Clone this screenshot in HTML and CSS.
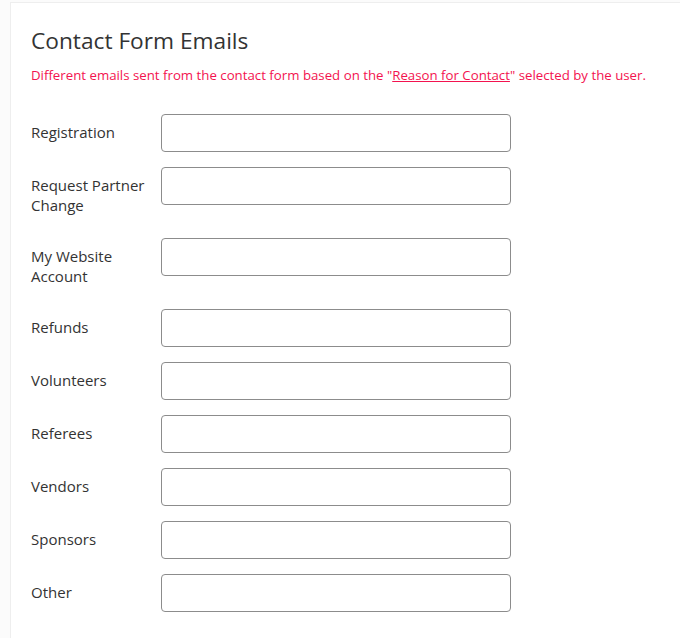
FILE: index.html
```html
<!DOCTYPE html>
<html>
<head>
<meta charset="utf-8">
<link rel="stylesheet" href="styles.css">
</head>
<body>
<div class="card">
  <h1 class="title">Contact Form Emails</h1>
  <p class="note">Different emails sent from the contact form based on the "<a href="#" class="note-link">Reason for Contact</a>" selected by the user.</p>
  <form class="form">
    <div class="row"><label class="label">Registration</label><input class="field" type="text"></div>
    <div class="row"><label class="label">Request Partner Change</label><input class="field" type="text"></div>
    <div class="row"><label class="label">My Website Account</label><input class="field" type="text"></div>
    <div class="row"><label class="label">Refunds</label><input class="field" type="text"></div>
    <div class="row"><label class="label">Volunteers</label><input class="field" type="text"></div>
    <div class="row"><label class="label">Referees</label><input class="field" type="text"></div>
    <div class="row"><label class="label">Vendors</label><input class="field" type="text"></div>
    <div class="row"><label class="label">Sponsors</label><input class="field" type="text"></div>
    <div class="row"><label class="label">Other</label><input class="field" type="text"></div>
  </form>
</div>
</body>
</html>
```
FILE: styles.css
```css
html, body {
  margin: 0;
  background: #fbfbfb;
}
body {
  box-sizing: border-box;
  min-height: 100vh;
  display: flex;
  flex-direction: column;
  padding: 2px 0 0 10px;
  font-family: "Open Sans", "Noto Sans", sans-serif;
  color: #333;
}
.card {
  flex: 1;
  background: #fff;
  border-top: 1px solid #eeeeee;
  border-left: 1px solid #eeeeee;
  padding: 23px 20px 20px 20px;
}
.title {
  margin: 0;
  font-size: 22.7px;
  font-weight: 400;
  line-height: 30px;
  color: #333;
}
.note {
  margin: 10px 0 30px 0;
  font-size: 13.25px;
  line-height: 18px;
  color: #f3134f;
}
.note-link {
  color: #f3134f;
  text-decoration: underline;
}
.form {
  display: flex;
  flex-direction: column;
  gap: 15px;
}
.row {
  display: flex;
  align-items: flex-start;
}
.label {
  width: 120px;
  padding: 8px 10px 8px 0;
  font-size: 15px;
  line-height: 20px;
  color: #333;
}
.field {
  box-sizing: border-box;
  width: 350px;
  height: 38px;
  margin: 0;
  border: 1px solid #8c8c8c;
  border-radius: 4px;
  background: #fff;
}
```
